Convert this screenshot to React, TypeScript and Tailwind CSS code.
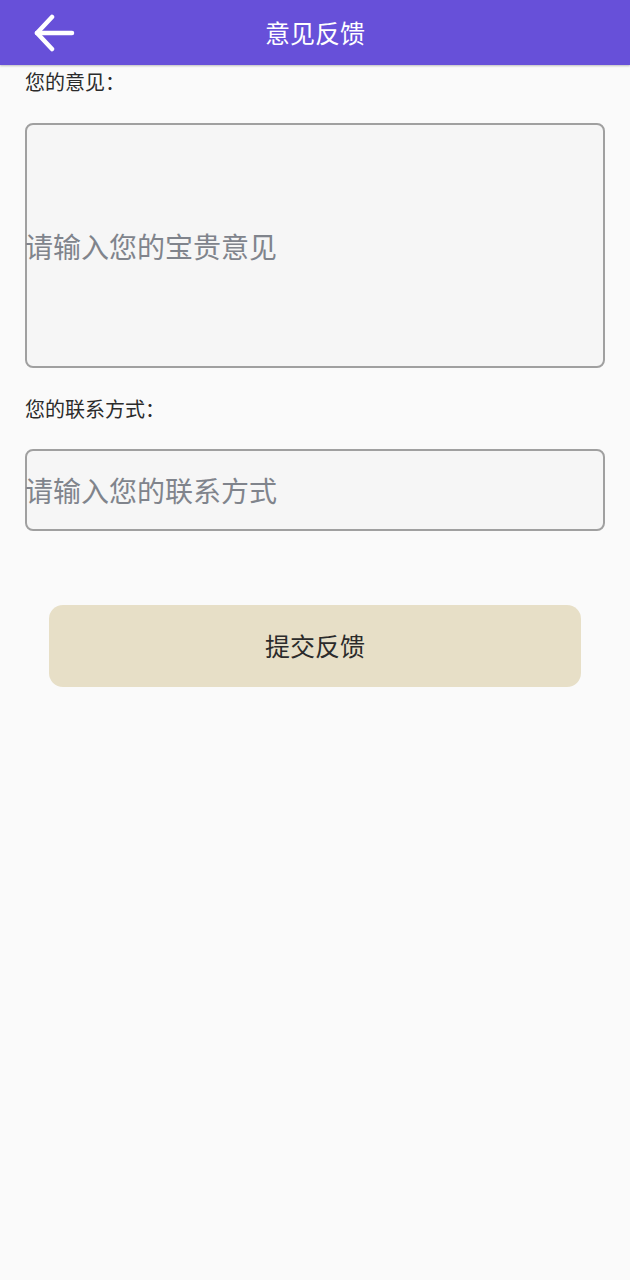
import { useState } from 'react'

const font = { fontFamily: '"Noto Sans CJK SC", "Noto Sans", sans-serif' }

export default function App() {
  const [opinion, setOpinion] = useState('')
  const [contact, setContact] = useState('')

  return (
    <div className="min-h-[1280px] w-full bg-[#fafafa]" style={font}>
      <header className="relative flex h-[65px] items-center justify-center bg-[#6750d9] shadow-[0_1px_2px_rgba(0,0,0,0.25)]">
        <button className="absolute left-[33px] top-[14px] flex h-[40px] w-[42px] items-center justify-center text-white">
          <svg width="42" height="40" viewBox="0 0 42 40" fill="none" stroke="currentColor" strokeWidth="4.5" strokeLinecap="round" strokeLinejoin="round">
            <path d="M39 19H4" />
            <path d="M19 3L4 19l15 16" />
          </svg>
        </button>
        <h1 className="text-[25px] leading-none text-white">意见反馈</h1>
      </header>

      <main className="px-[25px]">
        <p className="pt-[3px] text-[20px] leading-[28px] text-[#2b2b2b]">您的意见：</p>
        <div className="mt-[27px] flex h-[245px] items-center rounded-[8px] border-2 border-[#a0a0a0] bg-[#f6f6f6]">
          <textarea
            value={opinion}
            onChange={(e) => setOpinion(e.target.value)}
            placeholder="请输入您的宝贵意见"
            rows={1}
            className="-ml-[2px] h-[40px] w-full resize-none bg-transparent text-[28px] leading-[40px] text-[#333] outline-none placeholder:text-[#80848c]"
          />
        </div>

        <p className="mt-[27px] text-[20px] leading-[28px] text-[#2b2b2b]">您的联系方式：</p>
        <div className="mt-[26px] flex h-[82px] items-center rounded-[8px] border-2 border-[#a0a0a0] bg-[#f6f6f6]">
          <input
            value={contact}
            onChange={(e) => setContact(e.target.value)}
            placeholder="请输入您的联系方式"
            className="-ml-[2px] h-[40px] w-full bg-transparent text-[28px] leading-[40px] text-[#333] outline-none placeholder:text-[#80848c]"
          />
        </div>

        <div className="px-[24px] pt-[74px]">
          <button className="flex h-[82px] w-full items-center justify-center rounded-[14px] bg-[#e7dfc7] text-[25px] text-[#2b2b2b]">
            提交反馈
          </button>
        </div>
      </main>
    </div>
  )
}
